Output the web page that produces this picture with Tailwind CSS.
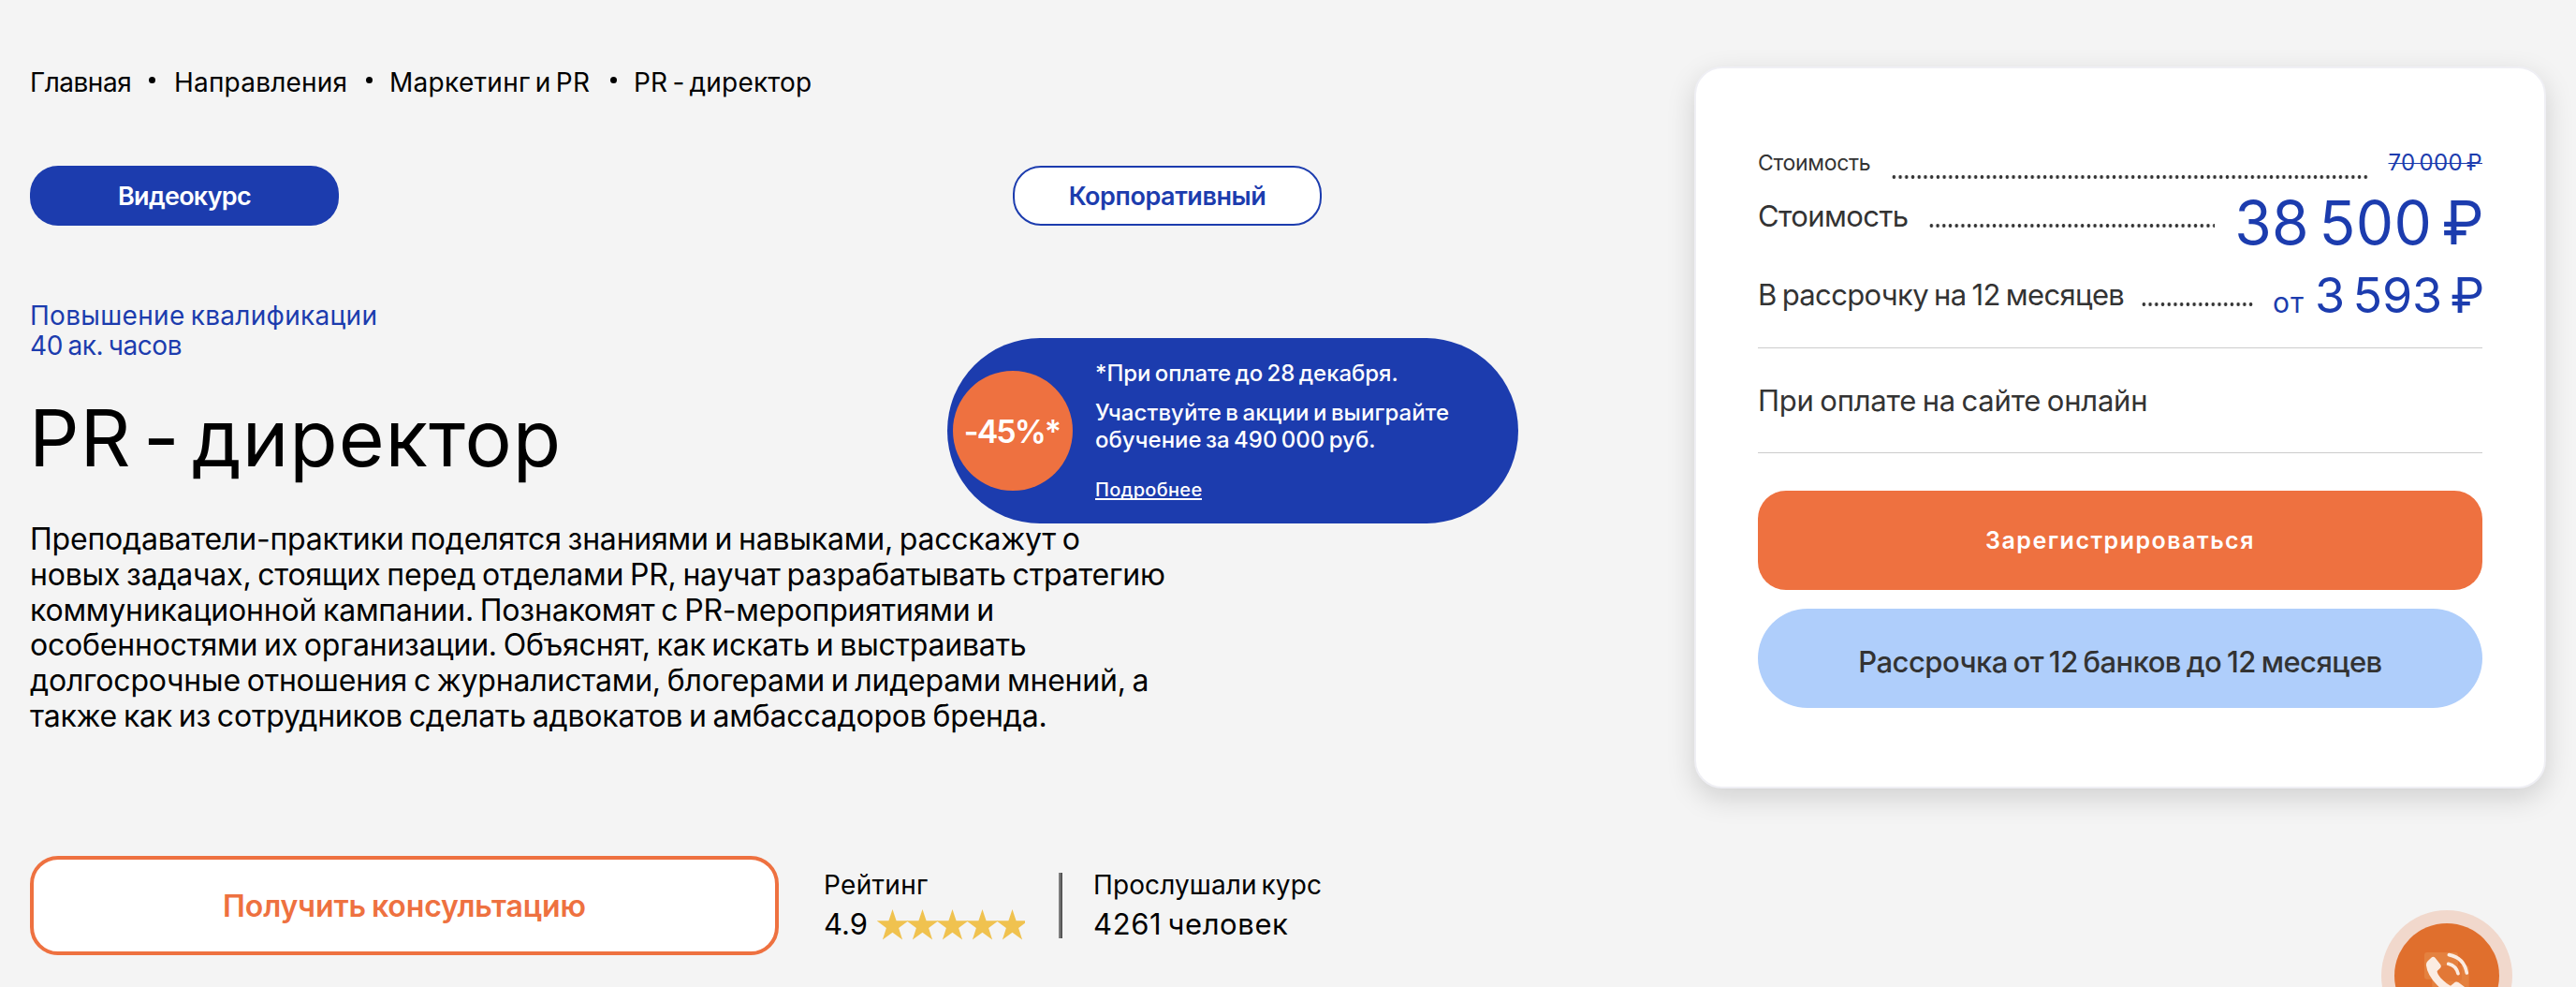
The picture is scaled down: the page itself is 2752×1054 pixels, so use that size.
<!DOCTYPE html>
<html lang="ru">
<head>
  <meta charset="UTF-8">
  <title>PR - директор</title>
  <meta name="viewport" content="width=device-width, initial-scale=1.0">
  <script src="https://cdn.jsdelivr.net/npm/@tailwindcss/browser@4"></script>
</head>
<body class="relative h-[1054px] overflow-hidden bg-[#f4f4f4] font-['Inter','Liberation_Sans',sans-serif] text-black">

  <div class="flex items-start">
    <!-- Course info -->
    <main class="w-[1810px] shrink-0 pl-8 pt-[68px]">
      <nav class="flex h-10 text-[28px] leading-10 whitespace-nowrap">
        <a class="w-[127px] tracking-[-0.5px]">Главная</a>
        <span class="mt-[14px] mr-[20px] size-[7px] rounded-full bg-black"></span>
        <a class="w-[205px] tracking-[0.2px]">Направления</a>
        <span class="mt-[14px] mr-[18px] size-[7px] rounded-full bg-black"></span>
        <a class="w-[236px] tracking-[0.3px] [word-spacing:-3px]">Маркетинг и PR</a>
        <span class="mt-[14px] mr-[18px] size-[7px] rounded-full bg-black"></span>
        <a class="tracking-[0.2px] [word-spacing:-3px]">PR - директор</a>
      </nav>

      <div class="mt-[69px] flex gap-[720px] text-[27px] font-semibold">
        <a class="flex h-16 w-[330px] items-center justify-center rounded-[30px] bg-[#1c3cae] pt-0.5 tracking-[-0.71px] text-white">Видеокурс</a>
        <a class="flex h-16 w-[330px] items-center justify-center rounded-[30px] border-2 border-[#1c3cae] bg-white pt-0.5 tracking-[-0.44px] text-[#1c3cae]">Корпоративный</a>
      </div>

      <div class="mt-[80px] text-[28px] leading-8 text-[#1c3cae]">
        <p class="tracking-[0.3px] [word-spacing:-2px]">Повышение квалификации</p>
        <p class="tracking-[-0.4px] [word-spacing:-2px]">40 ак. часов</p>
      </div>

      <h1 class="mt-[33px] -ml-px text-[84px] leading-[100px] tracking-[0.9px] [word-spacing:-12px]">PR - директор</h1>

      <p class="mt-[39px] text-[32px] leading-[37.75px] tracking-[-0.2px] [word-spacing:-2px] whitespace-nowrap">
        Преподаватели-практики поделятся знаниями и навыками, расскажут о<br>
        новых задачах, стоящих перед отделами PR, научат разрабатывать стратегию<br>
        коммуникационной кампании. Познакомят с PR-мероприятиями и<br>
        особенностями их организации. Объяснят, как искать и выстраивать<br>
        долгосрочные отношения с журналистами, блогерами и лидерами мнений, а<br>
        также как из сотрудников сделать адвокатов и амбассадоров бренда.
      </p>

      <div class="mt-[130.5px] flex">
        <a class="flex h-[106px] w-[800px] items-center justify-center rounded-[30px] border-4 border-[#ee7140] bg-white pt-0.5 text-[32px] font-semibold tracking-[-0.1px] [word-spacing:-2px] text-[#ee7140]">Получить консультацию</a>
        <div class="ml-12 w-[251px] pt-[11px]">
          <p class="text-[28px] leading-10 tracking-[0.3px]">Рейтинг</p>
          <div class="flex h-11 items-center text-[31px] leading-[44px]">
            <span class="w-[57px]">4.9</span>
            <svg class="h-[33px] w-[158px]" viewBox="0 0 158 33" fill="#f0c24f">
              <defs>
                <path id="star" d="M16.5 0l4.1 12.2h12.9L23.1 19.9l4 12.6-10.6-7.7-10.6 7.7 4-12.6L-.5 12.2h12.9z"/>
              </defs>
              <use href="#star"/>
              <use href="#star" x="32"/>
              <use href="#star" x="64"/>
              <use href="#star" x="96"/>
              <use href="#star" x="128"/>
            </svg>
          </div>
        </div>
        <div class="mt-[18px] h-[70px] w-1 border-r-2 border-[#555] bg-[#7d7d7d]"></div>
        <div class="ml-[33px] pt-[11px]">
          <p class="text-[28px] leading-10 tracking-[0.1px] [word-spacing:-3px]">Прослушали курс</p>
          <p class="text-[31px] leading-[44px] tracking-[0.6px] [word-spacing:-3px]">4261 человек</p>
        </div>
      </div>
    </main>

    <!-- Price card -->
    <aside class="mt-[71px] h-[771px] w-[910px] shrink-0 rounded-[30px] border-2 border-[#efeff4] bg-white px-[66px] pt-[84px] text-[31px] text-[#333] shadow-[0_10px_30px_rgba(0,0,0,0.15)]">
      <div class="flex h-10 items-start text-[23px] leading-[30px]">
        <span class="mt-0.5 w-[142px] tracking-[-0.3px]">Стоимость</span>
        <span class="mt-[30px] h-1 w-[510px] bg-[radial-gradient(circle,#333_1.6px,transparent_2.1px)] bg-[length:6.73px_4px] bg-repeat-x"></span>
        <span class="mt-0.5 ml-auto text-2xl leading-[30px] tracking-[0.3px] [word-spacing:-3px] text-[#1c3cae] line-through decoration-1">70 000 ₽</span>
      </div>
      <div class="flex h-[82px] items-start">
        <span class="mt-[14px] w-[182px] leading-10 tracking-[-0.6px]">Стоимость</span>
        <span class="mt-[41.5px] h-1 w-[306px] bg-[radial-gradient(circle,#333_1.6px,transparent_2.1px)] bg-[length:6.73px_4px] bg-repeat-x"></span>
        <span class="ml-auto -mr-0.5 text-[64px] leading-[82px] tracking-[0.4px] [word-spacing:-8px] whitespace-nowrap text-[#1c3cae]">38 500 ₽</span>
      </div>
      <div class="flex h-[74px] items-start">
        <span class="mt-4 w-[409px] leading-10 tracking-[-0.65px] [word-spacing:-2px] whitespace-nowrap">В рассрочку на 12 месяцев</span>
        <span class="mt-[43.5px] h-1 w-[120px] bg-[radial-gradient(circle,#333_1.6px,transparent_2.1px)] bg-[length:6.73px_4px] bg-repeat-x"></span>
        <span class="ml-auto -mr-0.5 flex items-baseline gap-[11px] text-[52px] leading-[74px] tracking-[-0.1px] [word-spacing:-6px] whitespace-nowrap text-[#1c3cae]"><span class="text-[30px] tracking-[1px]">от</span>3 593 ₽</span>
      </div>
      <div class="mt-[18px] flex h-[113px] items-center border-y border-[#ccc] pt-0.5 tracking-[-0.2px] [word-spacing:-2px]">При оплате на сайте онлайн</div>
      <a class="mt-10 flex h-[106px] items-center justify-center rounded-[30px] bg-[#ee7140] pt-0.5 text-[25px] font-semibold tracking-[1.5px] text-white">Зарегистрироваться</a>
      <a class="mt-5 flex h-[106px] items-center justify-center rounded-full bg-[#afcefb] pt-2 font-medium tracking-[-0.53px] [word-spacing:-2px]">Рассрочка от 12 банков до 12 месяцев</a>
    </aside>
  </div>

  <!-- Promo badge -->
  <div class="absolute top-[361px] left-[1012px] flex h-[198px] w-[610px] rounded-full bg-[#1c3cae] font-medium whitespace-nowrap text-white">
    <div class="mt-[35px] ml-1.5 flex size-32 items-center justify-center rounded-full bg-[#ee7140] pr-0.5 text-[34px] font-semibold tracking-[-2px]">-45%*</div>
    <div class="ml-6 pt-[23px] text-2xl leading-[29px] [word-spacing:-2px]">
      <p class="tracking-[-0.05px]">*При оплате до 28 декабря.</p>
      <p class="mt-[13px] tracking-[0.07px]">Участвуйте в акции и выиграйте</p>
      <p>обучение за 490 000 руб.</p>
      <a class="mt-[30px] inline-block border-b-2 text-xl leading-[18px] tracking-[0.3px]">Подробнее</a>
    </div>
  </div>

  <!-- Call button -->
  <div class="absolute top-[972px] left-[2544px] h-[82px] w-[140px] overflow-hidden">
    <svg class="h-[82px] w-[140px]" viewBox="72 66 420 246">
      <circle cx="282" cy="276" r="210" fill="#f1d8cc"/>
      <circle cx="282" cy="276" r="168" fill="#e06f2d"/>
      <rect x="210" y="201" width="108" height="86" rx="9" fill="#e4813f"/>
      <rect x="235" y="243" width="118" height="100" rx="9" fill="#e4813f"/>
      <rect x="235" y="243" width="95" height="50" rx="9" fill="#e27837"/>
      <path d="M216 243Q215 235 221 229L232 218Q239 212 245 219L261 239Q266 246 261 251L251 261Q250 268 262 283Q283 304 294 308L305 299Q312 293 320 298L342 314Q348 320 342 327L330 340Q324 346 314 344Q280 336 251 306Q219 273 216 243z" fill="#fbece2"/>
      <path d="M289 209Q337 218 346 267M287 238Q312 244 318 269" fill="none" stroke="#fbece2" stroke-width="11" stroke-linecap="round"/>
    </svg>
  </div>

</body>
</html>
